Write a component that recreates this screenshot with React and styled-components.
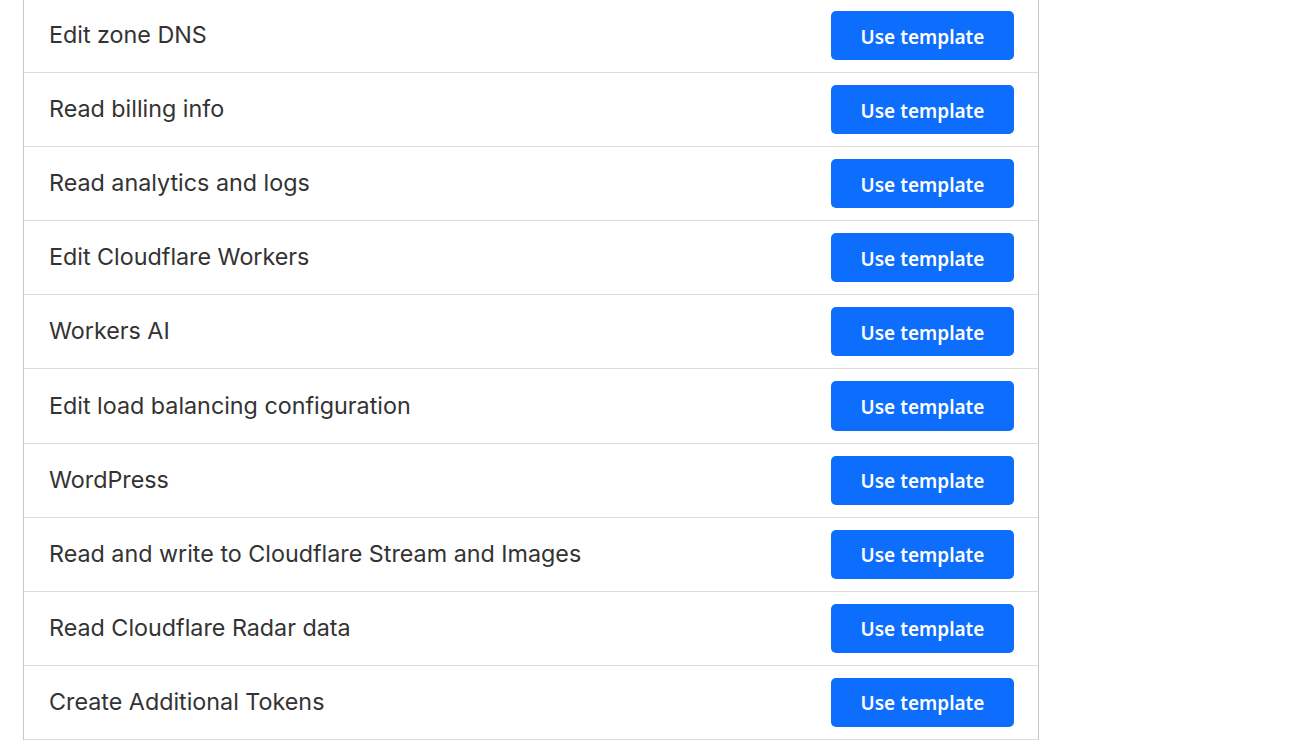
import React from 'react';
import styled, { createGlobalStyle } from 'styled-components';

const GlobalStyle = createGlobalStyle`
  body {
    margin: 0;
    background: #fff;
    font-family: Inter, "Noto Sans", sans-serif;
  }
`;

const Page = styled.div`
  padding: 0 263px 0 23px;
  margin-top: -2px;
`;

const List = styled.div`
  border-left: 1px solid #c8c8c8;
  border-right: 1px solid #c8c8c8;
  border-top: 1px solid #dcdcdc;
`;

const Row = styled.div`
  display: flex;
  align-items: center;
  justify-content: space-between;
  padding: 12px 24px 12px 25px;
  border-bottom: 1px solid #dcdcdc;
`;

const Label = styled.span`
  font-family: Inter, sans-serif;
  font-size: 23.3px;
  color: #333;
  margin-bottom: 2px;
`;

const Button = styled.button`
  width: 183px;
  height: 49.1px;
  border: none;
  border-radius: 5px;
  background: #0d6efd;
  color: #fff;
  font-family: "Noto Sans", sans-serif;
  font-weight: 600;
  font-size: 19px;
  padding: 2px 0 0;
  cursor: pointer;
`;

const templates = [
  'Edit zone DNS',
  'Read billing info',
  'Read analytics and logs',
  'Edit Cloudflare Workers',
  'Workers AI',
  'Edit load balancing configuration',
  'WordPress',
  'Read and write to Cloudflare Stream and Images',
  'Read Cloudflare Radar data',
  'Create Additional Tokens',
];

const App = () => {
  return (
    <>
      <GlobalStyle />
      <Page>
        <List>
          {templates.map((name) => (
            <Row key={name}>
              <Label>{name}</Label>
              <Button>Use template</Button>
            </Row>
          ))}
        </List>
      </Page>
    </>
  );
};

export default App;
